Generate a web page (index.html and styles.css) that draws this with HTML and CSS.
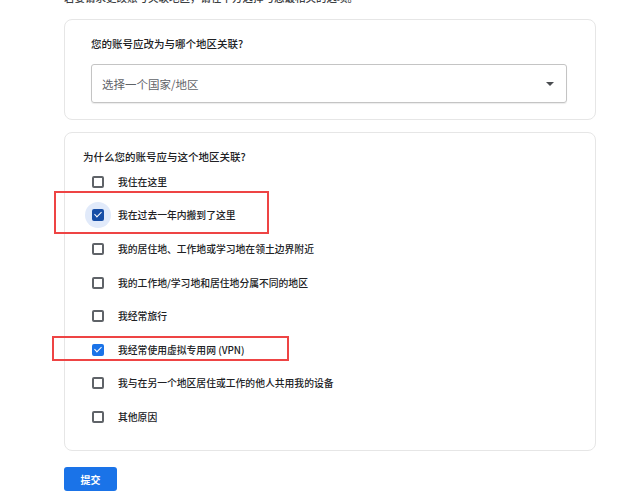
FILE: index.html
```html
<!DOCTYPE html>
<html lang="zh-CN">
<head>
    <meta charset="UTF-8">
    <meta name="viewport" content="width=device-width, initial-scale=1.0">
    <title>更改关联地区</title>
    <link rel="stylesheet" href="styles.css">
</head>
<body>

    <div class="page">
        <p class="intro">若要请求更改账号关联地区，请在下方选择与您最相关的选项。</p>

        <div class="card card-region">
            <div class="card-label">您的账号应改为与哪个地区关联?</div>
            <div class="select">
                <span class="placeholder">选择一个国家/地区</span>
                <span class="arrow"></span>
            </div>
        </div>

        <div class="card card-reasons">
            <div class="card-label">为什么您的账号应与这个地区关联?</div>
            <ul class="options">
                <li class="option"><span class="box"></span>我住在这里</li>
                <li class="option"><span class="halo"><span class="box checked focused"></span></span>我在过去一年内搬到了这里</li>
                <li class="option"><span class="box"></span>我的居住地、工作地或学习地在领土边界附近</li>
                <li class="option"><span class="box"></span>我的工作地/学习地和居住地分属不同的地区</li>
                <li class="option"><span class="box"></span>我经常旅行</li>
                <li class="option"><span class="box checked"></span>我经常使用虚拟专用网 (VPN)</li>
                <li class="option"><span class="box"></span>我与在另一个地区居住或工作的他人共用我的设备</li>
                <li class="option"><span class="box"></span>其他原因</li>
            </ul>
        </div>

        <button class="submit">提交</button>

        <!-- red annotation boxes drawn on top of the screenshot -->
        <div class="mark mark-1"></div>
        <div class="mark mark-2"></div>
    </div>

</body>
</html>
```

FILE: styles.css
```css
body {
    margin: 0;
    padding: 0;
    background-color: #ffffff;
    color: #202124;
    font-family: "Noto Sans CJK SC", "Noto Sans", sans-serif;
}

.page {
    position: relative;
    display: flow-root;
    width: 532px;
    padding-left: 64px;
}

.intro {
    margin: -10px 0 0 0;
    font-size: 10.5px;
    font-weight: 500;
    line-height: 16px;
    color: #3c4043;
    white-space: nowrap;
}

.card {
    border: 1px solid #e6e6e6;
    border-radius: 8px;
    box-sizing: border-box;
}

.card-region {
    margin-top: 13px;
    height: 101px;
    padding: 16px 28px 0 26px;
}

.card-label {
    font-size: 10.5px;
    font-weight: 500;
    line-height: 16px;
    color: #202124;
}

.select {
    margin-top: 12px;
    height: 39px;
    box-sizing: border-box;
    border: 1px solid #c4c4c4;
    border-radius: 3px;
    box-shadow: 0 1px 1px rgba(0, 0, 0, 0.08);
    display: flex;
    align-items: center;
    justify-content: space-between;
    padding: 0 12px 0 10px;
}

.placeholder {
    font-size: 11.5px;
    color: #5f6368;
}

.arrow {
    width: 0;
    height: 0;
    border-left: 4px solid transparent;
    border-right: 4px solid transparent;
    border-top: 4px solid #4a4d51;
}

.card-reasons {
    margin-top: 12px;
    height: 319px;
    padding: 16px 18px 0 18px;
}

.options {
    list-style: none;
    margin: 0;
    padding: 0;
}

.option {
    height: 33.6px;
    display: flex;
    align-items: center;
    padding-left: 9px;
    font-size: 9.8px;
    font-weight: 500;
    color: #202124;
}

.box {
    position: relative;
    width: 12px;
    height: 12px;
    box-sizing: border-box;
    border: 2px solid #5f6368;
    border-radius: 2px;
    margin-right: 14px;
    flex-shrink: 0;
}

.box.checked {
    border-color: #1a73e8;
    background-color: #1a73e8;
}

.box.checked::after {
    content: "";
    position: absolute;
    left: 2px;
    top: -1px;
    width: 3px;
    height: 6px;
    border-right: 1.5px solid #ffffff;
    border-bottom: 1.5px solid #ffffff;
    transform: rotate(45deg);
}

.halo {
    width: 26px;
    height: 26px;
    margin: 0 7px 0 -7px;
    border-radius: 50%;
    background-color: #e1eafa;
    display: flex;
    align-items: center;
    justify-content: center;
    flex-shrink: 0;
}

.halo .box {
    margin-right: 0;
}

.box.focused {
    border-color: #174ea6;
    background-color: #174ea6;
}

.submit {
    margin-top: 16px;
    width: 53px;
    height: 24px;
    border: none;
    border-radius: 3px;
    background-color: #1a73e8;
    color: #ffffff;
    font-family: inherit;
    font-size: 10px;
    font-weight: bold;
    cursor: pointer;
}

.mark {
    position: absolute;
    border: 2.5px solid #ee4444;
    box-sizing: border-box;
}

.mark-1 {
    left: 54px;
    top: 191px;
    width: 215px;
    height: 43px;
}

.mark-2 {
    left: 52px;
    top: 336px;
    width: 237px;
    height: 25px;
}
```
